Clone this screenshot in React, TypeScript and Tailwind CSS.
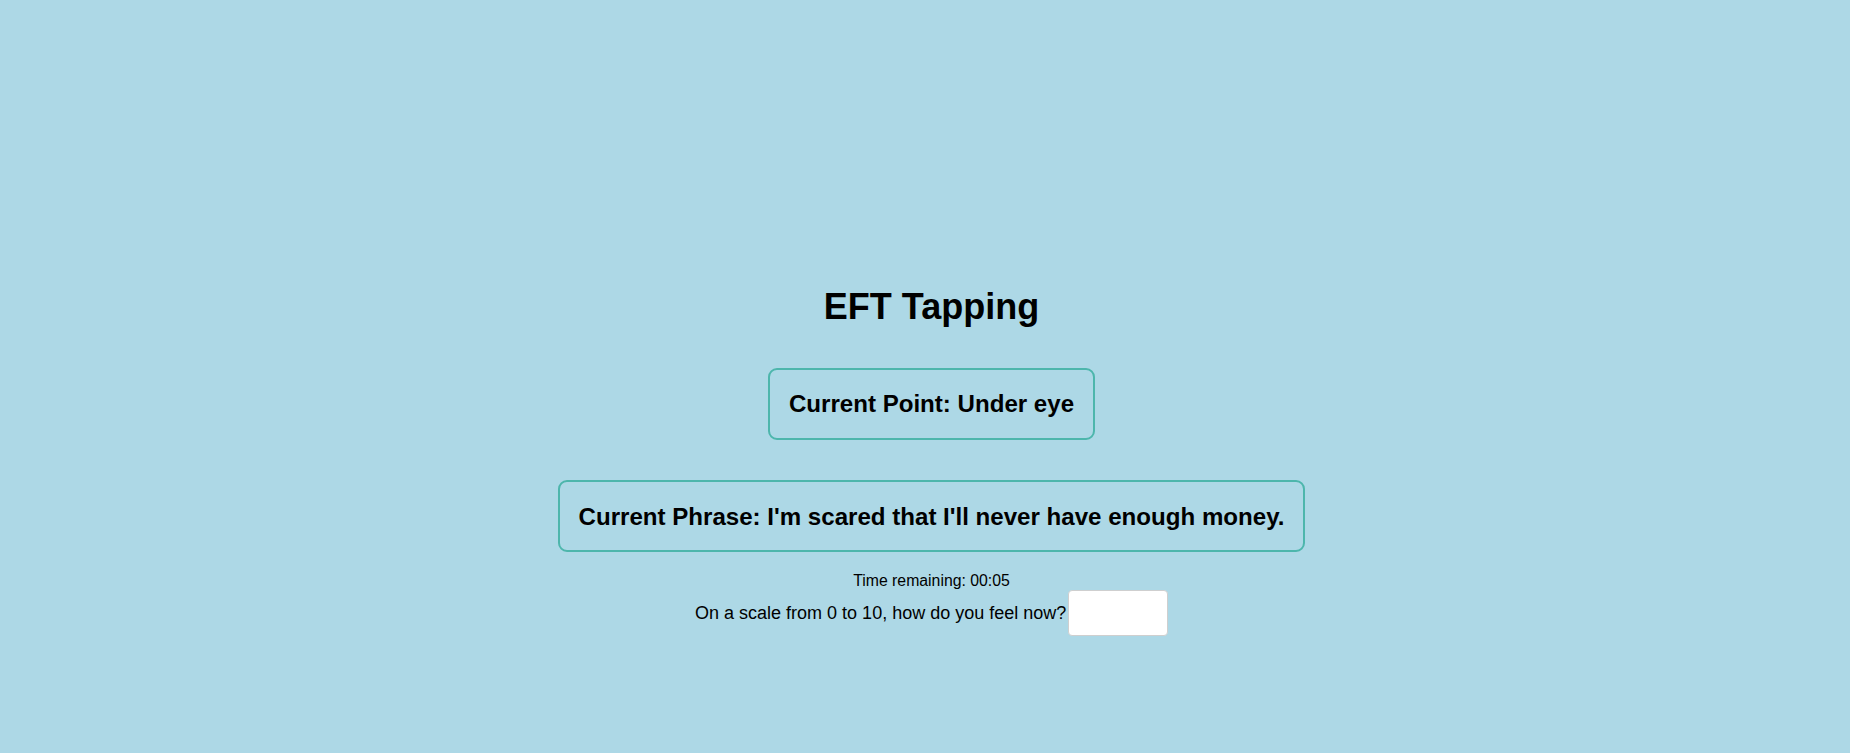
import React, { useState } from 'react'

const font = { fontFamily: '"Liberation Sans", Arial, sans-serif' }

export default function App() {
  const [rating, setRating] = useState('')

  return (
    <div
      style={font}
      className="min-h-screen w-full bg-[#add8e6] text-black flex flex-col items-center pt-[287px] pl-[13px]"
    >
      <h1 className="text-[36px] leading-[40px] font-bold">EFT Tapping</h1>

      <div className="mt-[41px] border-[2.36px] border-[#4db6ac] rounded-[9px] px-[18.9px] py-[20.2px]">
        <h2 className="text-[24.1px] leading-[27.6px] font-bold">Current Point: Under eye</h2>
      </div>

      <div className="mt-[40.5px] border-[2.36px] border-[#4db6ac] rounded-[9px] px-[18.9px] py-[20.2px]">
        <h2 className="text-[24.1px] leading-[27.6px] font-bold">
          Current Phrase: I'm scared that I'll never have enough money.
        </h2>
      </div>

      <p className="mt-[19.5px] text-[15.8px] leading-[18.2px]">Time remaining: 00:05</p>

      <div className="-mt-[0.5px] flex items-center">
        <label htmlFor="rating" className="text-[18px] leading-[20.7px]">
          On a scale from 0 to 10, how do you feel now?
        </label>
        <input
          id="rating"
          type="text"
          value={rating}
          onChange={(e) => setRating(e.target.value)}
          className="ml-[1.7px] w-[100px] h-[46.5px] bg-white border border-[#cfcfcf] rounded-[4px] px-2 text-[18px] outline-none"
        />
      </div>
    </div>
  )
}
